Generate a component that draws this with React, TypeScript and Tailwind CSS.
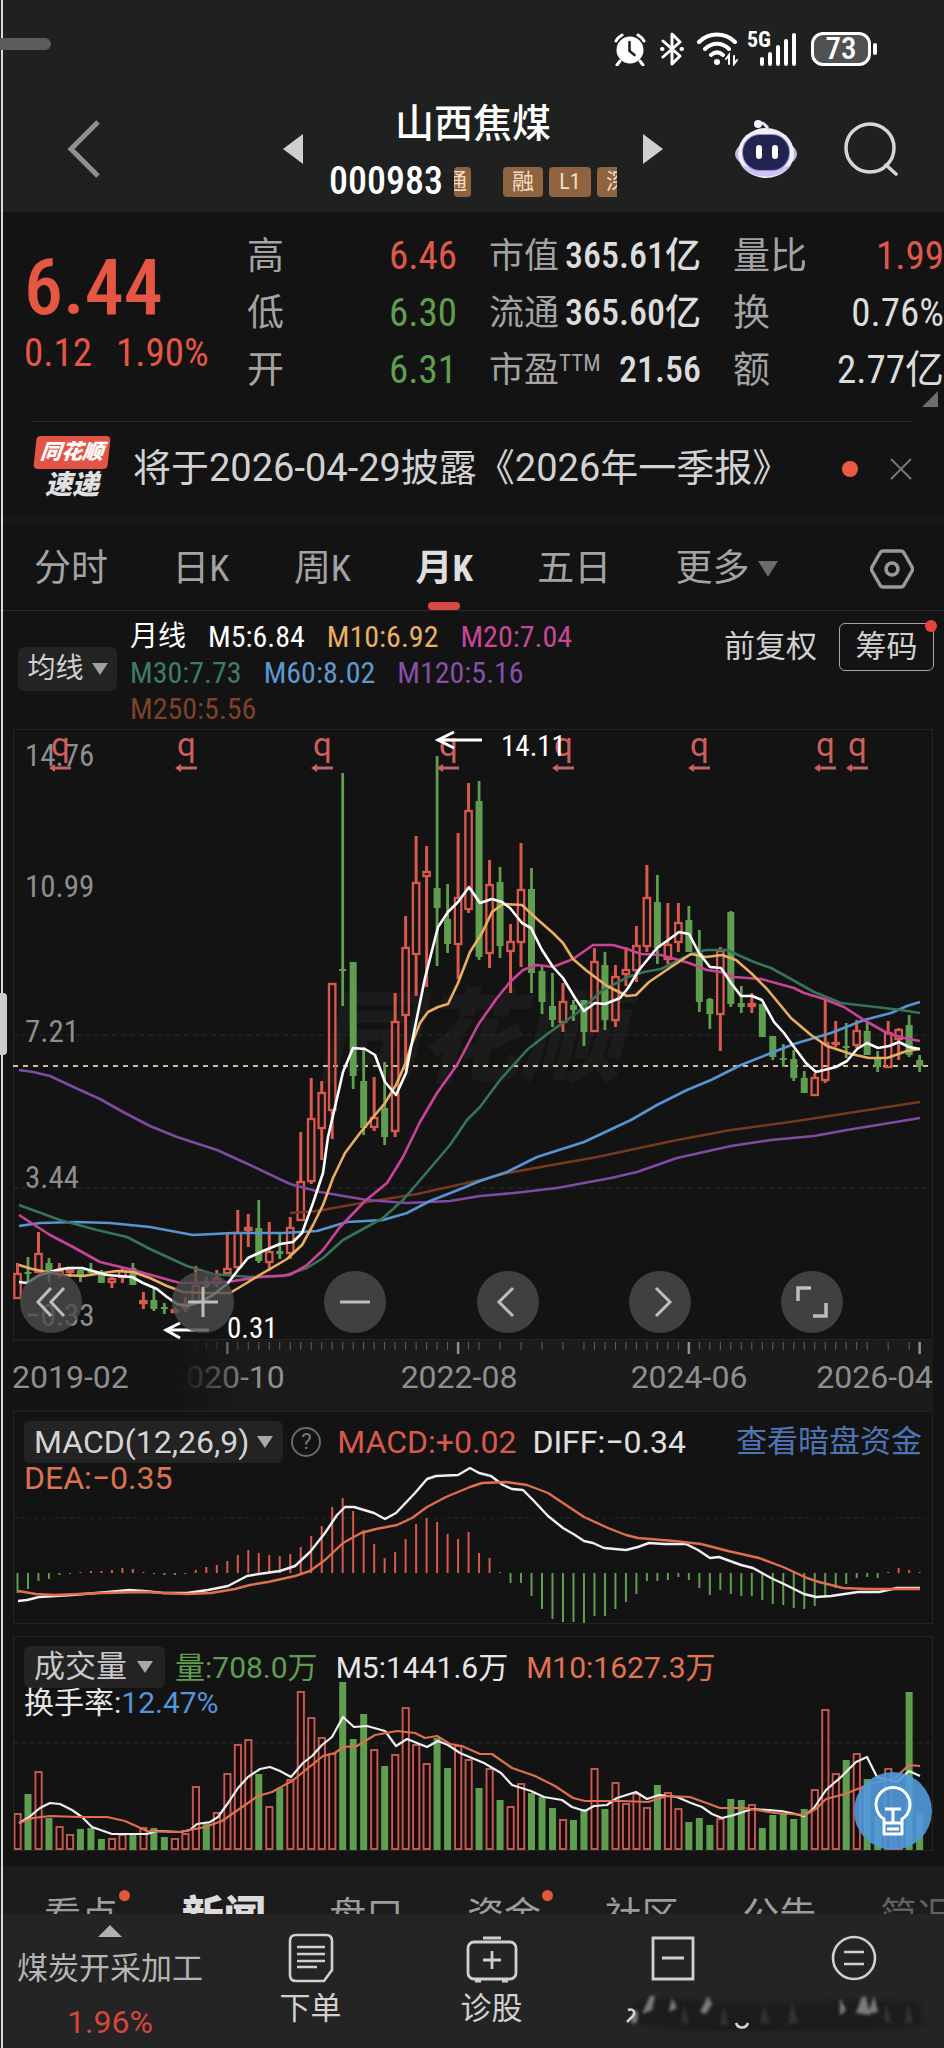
import type { ReactNode } from 'react'

type Candle = [dir: 'u' | 'd', high: number, top: number, bottom: number, low: number]

const STEP = 10.49
const X0 = 17.5
const RED = '#d9594c'
const GREEN = '#5f9e4f'

const x = (i: number) => X0 + STEP * i

const candles: Candle[] = [
  ['u', 1263, 1273, 1299, 1299], ['d', 1257, 1272, 1274, 1283], ['u', 1232, 1253, 1273, 1273], ['d', 1258, 1263, 1272, 1282],
  ['u', 1263, 1270, 1275, 1278], ['u', 1267, 1269, 1273, 1277], ['d', 1267, 1270, 1277, 1282], ['d', 1263, 1270, 1273, 1276],
  ['d', 1270, 1272, 1283, 1283], ['u', 1277, 1278, 1283, 1288], ['u', 1267, 1270, 1278, 1283], ['d', 1263, 1268, 1285, 1285],
  ['u', 1292, 1300, 1304, 1309], ['d', 1287, 1300, 1309, 1311], ['d', 1303, 1307, 1309, 1314], ['u', 1307, 1309, 1313, 1313],
  ['u', 1297, 1303, 1309, 1312], ['u', 1266, 1285, 1303, 1303], ['d', 1277, 1282, 1287, 1288], ['u', 1270, 1278, 1284, 1287],
  ['u', 1233, 1268, 1274, 1275], ['u', 1210, 1232, 1268, 1270], ['u', 1214, 1227, 1231, 1247], ['d', 1200, 1228, 1261, 1263],
  ['u', 1222, 1251, 1263, 1271], ['d', 1233, 1251, 1254, 1259], ['u', 1217, 1227, 1254, 1259], ['u', 1132, 1181, 1221, 1221],
  ['u', 1078, 1118, 1182, 1184], ['u', 1081, 1092, 1129, 1160], ['u', 983, 983, 1111, 1139], ['d', 773, 969, 971, 1006],
  ['d', 962, 962, 1076, 1089], ['d', 1047, 1081, 1128, 1135], ['u', 1077, 1117, 1128, 1131], ['d', 1062, 1108, 1137, 1145],
  ['u', 993, 1021, 1132, 1137], ['u', 916, 947, 1016, 1070], ['u', 836, 882, 955, 996], ['u', 846, 871, 877, 987],
  ['d', 756, 888, 908, 966], ['d', 884, 919, 944, 953], ['u', 833, 897, 945, 979], ['u', 783, 810, 910, 913],
  ['d', 781, 801, 957, 960], ['u', 860, 884, 954, 968], ['d', 867, 882, 946, 958], ['u', 924, 941, 952, 993],
  ['u', 843, 889, 943, 967], ['d', 868, 889, 973, 993], ['d', 966, 971, 1002, 1014], ['d', 973, 1006, 1020, 1027],
  ['u', 983, 1001, 1023, 1032], ['d', 1000, 1005, 1010, 1021], ['d', 1000, 1000, 1032, 1046], ['u', 948, 961, 1032, 1032],
  ['d', 952, 965, 1020, 1030], ['u', 965, 976, 1021, 1027], ['u', 947, 969, 975, 986], ['u', 926, 945, 971, 982],
  ['u', 865, 897, 947, 952], ['d', 875, 902, 948, 964], ['u', 903, 944, 960, 964], ['u', 903, 922, 943, 952],
  ['d', 906, 920, 952, 952], ['d', 930, 953, 1002, 1012], ['d', 998, 999, 1014, 1029], ['u', 947, 950, 1015, 1051],
  ['d', 911, 912, 1004, 1007], ['d', 986, 1003, 1007, 1013], ['u', 993, 1003, 1007, 1013], ['d', 1004, 1004, 1037, 1037],
  ['d', 1036, 1036, 1057, 1060], ['d', 1044, 1058, 1060, 1067], ['d', 1050, 1059, 1078, 1081], ['d', 1071, 1078, 1093, 1093],
  ['u', 1073, 1077, 1096, 1096], ['u', 999, 1042, 1081, 1083], ['u', 1021, 1042, 1045, 1047], ['d', 1023, 1046, 1048, 1058],
  ['u', 1020, 1030, 1046, 1048], ['d', 1022, 1031, 1055, 1055], ['d', 1051, 1057, 1067, 1072], ['u', 1021, 1032, 1068, 1068],
  ['u', 1028, 1029, 1040, 1060], ['d', 1015, 1025, 1055, 1057], ['d', 1055, 1060, 1066, 1072],
]

const averages = [
  {
    color: '#74391f',
    points: '290,1213 317,1211 367,1202 417,1194 480,1180 507,1173 597,1157 677,1140 731,1130 797,1121 887,1107 920,1102',
  },
  {
    color: '#7f4aa3',
    points:
      '19,1070 33,1072 50,1076 80,1090 100,1099 123,1112 150,1126 177,1137 217,1150 250,1165 290,1184 320,1192 367,1200 407,1203 450,1201 480,1196 514,1193 557,1188 611,1178 637,1172 677,1158 731,1146 771,1140 814,1136 847,1130 914,1119 920,1118',
  },
  {
    color: '#5694d2',
    points:
      '19,1226 40,1223 77,1222 110,1223 150,1227 193,1235 233,1233 283,1233 317,1231 347,1222 383,1220 407,1213 430,1201 453,1192 480,1181 507,1172 537,1157 584,1142 631,1120 657,1105 687,1090 711,1080 741,1065 771,1053 794,1044 831,1033 864,1020 891,1013 907,1006 920,1002',
  },
  {
    color: '#36745a',
    points:
      '19,1205 60,1220 97,1230 127,1237 150,1249 187,1266 213,1274 250,1277 283,1276 307,1268 323,1258 343,1240 383,1218 403,1200 427,1172 450,1145 467,1120 480,1107 500,1080 528,1049 550,1032 577,1013 603,990 628,977 644,972 661,969 691,954 706,950 727,950 754,962 771,968 791,979 814,992 841,1003 867,1006 901,1010 920,1013',
  },
  {
    color: '#cb4398',
    points:
      '19,1215 50,1235 73,1247 100,1262 133,1270 180,1283 227,1282 260,1277 290,1275 307,1265 323,1250 340,1227 365,1201 387,1183 403,1157 420,1122 437,1093 457,1065 466,1048 478,1025 497,998 510,982 523,970 537,965 553,967 573,959 593,945 613,945 627,949 641,954 661,955 689,963 707,970 721,972 734,977 761,979 794,988 804,993 824,999 844,1007 864,1020 887,1033 904,1038 920,1041',
  },
  {
    color: '#e9ae62',
    points:
      '19,1265 32,1269 47,1272 63,1275 83,1276 103,1273 117,1271 133,1272 150,1278 167,1286 183,1292 203,1293 230,1293 245,1284 263,1273 287,1259 302,1245 313,1225 323,1205 333,1178 345,1153 360,1133 385,1103 396,1085 406,1062 411,1046 420,1023 428,1012 438,1007 448,1004 458,983 470,952 482,933 492,912 503,904 522,905 537,919 553,933 563,943 573,959 587,971 607,986 627,996 636,995 649,982 671,967 691,954 706,957 722,955 736,960 751,973 767,989 791,1018 811,1035 827,1046 851,1054 869,1058 887,1058 907,1051 920,1049',
  },
  {
    color: '#ffffff',
    points:
      '19,1282 27,1283 40,1275 57,1270 68,1268 82,1268 93,1271 107,1275 132,1277 143,1283 157,1289 167,1297 177,1304 187,1306 200,1302 213,1295 228,1283 238,1270 248,1258 263,1251 280,1244 293,1242 302,1233 313,1203 323,1173 328,1137 335,1107 343,1072 353,1048 365,1049 375,1055 385,1082 396,1095 406,1073 413,1037 425,978 438,927 448,912 458,902 469,887 480,903 492,899 502,902 510,908 522,923 531,928 542,950 553,967 563,978 575,998 584,1011 595,1003 605,1004 620,998 628,988 639,970 657,948 671,938 679,932 689,934 699,953 710,967 721,968 731,983 741,996 752,996 762,1000 774,1022 784,1033 794,1047 806,1063 816,1072 836,1067 847,1061 857,1049 867,1043 878,1048 889,1046 899,1042 909,1047 920,1049',
  },
]

const macdBars = [
  -20, -16, -8, -6, -2, -1, 1, 2, 2, 3, 5, 4, 1, -1, -2, -2, -1, 3, 6, 8, 12, 18, 23, 20, 18, 17, 19, 26, 37, 47, 66, 75, 62, 43,
  29, 15, 21, 34, 49, 55, 51, 39, 34, 41, 20, 15, 1, -10, -10, -23, -36, -46, -49, -49, -51, -43, -43, -36, -29, -21, -8, -8, -7,
  -4, -7, -15, -22, -17, -21, -23, -23, -27, -31, -32, -35, -36, -33, -23, -15, -11, -5, -4, -5, 1, 5, 3, 1,
]

const diffLine =
  '18,1601 27,1600 39,1597 72,1595 108,1592 129,1590 144,1591 163,1593 187,1593 208,1590 228,1586 247,1576 259,1574 280,1571 295,1566 310,1552 325,1533 337,1515 345,1507 354,1507 364,1510 374,1513 385,1519 396,1513 415,1493 427,1479 436,1476 458,1475 470,1468 479,1473 491,1476 503,1485 512,1489 523,1490 533,1500 548,1516 563,1528 575,1535 584,1541 593,1543 604,1548 626,1550 638,1547 649,1543 665,1544 686,1544 698,1550 710,1558 719,1557 741,1565 753,1568 771,1578 786,1585 804,1594 816,1597 831,1596 858,1592 879,1592 897,1588 920,1588'

const deaLine =
  '18,1591 36,1594 54,1595 102,1593 144,1592 187,1594 211,1593 235,1589 250,1585 268,1582 295,1576 310,1571 325,1560 343,1543 361,1533 376,1529 397,1525 412,1518 427,1507 446,1497 470,1487 482,1483 506,1482 527,1485 548,1493 584,1517 608,1528 626,1535 638,1538 674,1541 701,1544 728,1551 759,1558 783,1567 807,1578 819,1582 843,1588 867,1589 885,1589 920,1589'

const volumes = [
  37, 56, 79, 32, 24, 16, 21, 22, 11, 12, 16, 17, 23, 22, 13, 12, 17, 64, 28, 38, 77, 106, 111, 76, 44, 62, 71, 159, 133, 113, 97,
  168, 111, 136, 101, 84, 96, 143, 106, 87, 112, 82, 105, 91, 62, 82, 50, 44, 67, 57, 53, 42, 31, 30, 41, 82, 41, 68, 47, 57, 43,
  65, 58, 42, 28, 32, 25, 32, 51, 50, 46, 22, 35, 37, 31, 41, 61, 141, 77, 90, 97, 71, 34, 82, 24, 158, 37,
]

const volM5 =
  '19,1823 28,1818 40,1808 50,1803 60,1804 72,1810 82,1817 92,1827 112,1834 147,1834 157,1831 180,1832 190,1830 197,1824 210,1822 218,1817 228,1803 238,1788 248,1777 260,1769 270,1767 280,1771 291,1777 303,1763 312,1756 322,1745 332,1737 343,1717 354,1727 367,1726 385,1731 396,1746 407,1739 427,1747 438,1741 448,1745 460,1753 484,1763 501,1773 512,1785 531,1791 544,1797 562,1800 572,1807 585,1811 594,1806 607,1805 617,1798 636,1792 647,1799 659,1795 677,1797 691,1803 702,1807 712,1814 722,1818 734,1815 752,1809 781,1811 791,1813 804,1816 814,1808 826,1790 841,1777 856,1762 867,1757 877,1777 897,1782 909,1771 920,1776'

const volM10 =
  '19,1823 33,1818 50,1816 80,1817 107,1817 125,1821 147,1831 180,1832 205,1827 222,1821 235,1812 258,1796 272,1792 292,1781 323,1756 335,1753 343,1747 357,1746 375,1735 397,1731 415,1733 425,1738 437,1736 450,1744 462,1746 480,1754 492,1754 512,1768 535,1776 555,1786 573,1798 585,1801 622,1801 648,1802 667,1796 690,1797 712,1805 720,1808 745,1808 775,1813 805,1815 817,1808 826,1799 845,1794 870,1784 895,1778 909,1765 920,1766'

const priceLabels = [
  { y: 766, text: '14.76' },
  { y: 897, text: '10.99' },
  { y: 1042, text: '7.21' },
  { y: 1188, text: '3.44' },
  { y: 1326, text: '−0.33' },
]

const dividendMarks = [49, 175, 311, 437, 552, 688, 814, 846]

const skippedTicks = [45, 47, 49, 51, 53, 82, 84]
const majorTicks = [20, 42, 64, 86]

function Caret({ className = '' }: { className?: string }) {
  return (
    <svg viewBox="0 0 16 12" className={`h-3 w-4 fill-current ${className}`} aria-hidden="true">
      <path d="M0 0h16L8 12z" />
    </svg>
  )
}

function StatusBar() {
  return (
    <div className="flex h-[98px] items-center justify-end gap-3 pr-[67px] text-white">
      <svg viewBox="0 0 34 34" className="h-[34px] w-[34px]" aria-hidden="true">
        <circle cx="17" cy="18" r="13.5" fill="#fff" />
        <path d="M3 9a16 16 0 0 1 6-6M31 9a16 16 0 0 0-6-6M7 29l-3 4M27 29l3 4" stroke="#fff" strokeWidth="3" strokeLinecap="round" fill="none" />
        <path d="M16.500 10v9l5 4" stroke="#1f2121" strokeWidth="2.600" fill="none" strokeLinecap="round" />
      </svg>
      <svg viewBox="0 0 26 34" className="h-[34px] w-[26px]" fill="none" stroke="#fff" strokeWidth="3" strokeLinejoin="round" strokeLinecap="round" aria-hidden="true">
        <path d="M4 9l17 15-8 8V2l8 8L4 25" />
        <path d="M3 17h.5M22.500 17h.5" strokeWidth="4" />
      </svg>
      <svg viewBox="0 0 42 34" className="h-[34px] w-[42px]" fill="none" stroke="#fff" strokeWidth="4" strokeLinecap="round" aria-hidden="true">
        <path d="M2 10c10-10 26-10 36 0M8 17c7-7 17-7 24 0M14 23c4-3.500 8-3.500 12 0" />
        <circle cx="20" cy="30" r="3" fill="#fff" stroke="none" />
        <path d="M32 32v-9l-3 4M37 24v8l3-4" strokeWidth="2" />
      </svg>
      <div className="relative -ml-1 h-[34px] w-[52px]">
        <span className="absolute left-0 top-0 text-[22px] leading-4 font-bold">5G</span>
        <svg viewBox="0 0 52 34" className="h-full w-full" stroke="#fff" strokeWidth="4" strokeLinecap="round" aria-hidden="true">
          <path d="M15 27v5M23 22v10M31 15v17M39 9v23M47 3v29" />
        </svg>
      </div>
      <div className="flex items-center">
        <span className="flex h-[34px] w-[60px] items-center justify-center rounded-xl border-[3px] border-white bg-[#505252] text-[31px] font-medium">73</span>
        <span className="ml-0.5 h-3 w-1 rounded-full bg-white" />
      </div>
    </div>
  )
}

function Tag({ children, className = '' }: { children: ReactNode; className?: string }) {
  return (
    <span className={`flex h-[30px] shrink-0 items-center overflow-hidden rounded-sm bg-[#8f633f] text-[22px] text-[#f3dfc3] ${className}`}>
      {children}
    </span>
  )
}

function NavBar() {
  return (
    <div className="flex h-[114px] items-center justify-between pl-[66px] pr-[46px]">
      <button type="button" aria-label="返回" className="mb-3">
        <svg viewBox="0 0 36 58" className="h-[58px] w-9" fill="none" stroke="#8f9090" strokeWidth="5" aria-hidden="true">
          <path d="M32 2L5 29l27 27" />
        </svg>
      </button>
      <div className="mb-1 ml-[110px] flex items-center">
        <button type="button" aria-label="上一只" className="mb-2">
          <svg viewBox="0 0 20 30" className="h-[30px] w-5 fill-[#cfcfcf]" aria-hidden="true">
            <path d="M20 0v30L0 15z" />
          </svg>
        </button>
        <div className="flex w-[340px] flex-col items-center">
          <h1 className="text-[39px] leading-[57px] font-medium text-white">山西焦煤</h1>
          <div className="flex h-[57px] w-[288px] items-center justify-between overflow-hidden">
            <span className="text-[38px] leading-[57px] font-medium text-white">000983</span>
            <div className="flex w-[163px] items-center gap-1.5 overflow-hidden">
              <Tag className="w-[17px] justify-end pr-1">通</Tag>
              <Tag className="ml-[26px] w-10 justify-center">融</Tag>
              <Tag className="w-[42px] justify-center">L1</Tag>
              <Tag className="w-10 justify-center">深</Tag>
            </div>
          </div>
        </div>
        <button type="button" aria-label="下一只" className="mb-2">
          <svg viewBox="0 0 20 30" className="h-[30px] w-5 fill-[#cfcfcf]" aria-hidden="true">
            <path d="M0 0v30l20-15z" />
          </svg>
        </button>
      </div>
      <div className="mb-3 flex items-center gap-[46px]">
        <button type="button" aria-label="智能助手">
          <svg viewBox="0 0 64 60" className="h-[60px] w-16" aria-hidden="true">
            <path d="M25 5c3-3 6 1 9 4" stroke="#e4e4f4" strokeWidth="3" fill="none" />
            <circle cx="24" cy="5" r="4" fill="#f3f3fb" />
            <ellipse cx="32" cy="35" rx="31" ry="16" fill="#bdb6ee" />
            <ellipse cx="32" cy="34" rx="28" ry="25" fill="#f0effa" />
            <path d="M6 44c7 18 45 18 52 0-6 8-46 8-52 0z" fill="#c9c4f2" />
            <rect x="8" y="15" width="48" height="37" rx="18" fill="#8f8fd6" />
            <rect x="9" y="16" width="46" height="35" rx="17" fill="#20244f" />
            <rect x="22" y="26" width="6" height="14" rx="3" fill="#fff" />
            <rect x="38" y="26" width="6" height="14" rx="3" fill="#fff" />
          </svg>
        </button>
        <button type="button" aria-label="搜索">
          <svg viewBox="0 0 54 54" className="h-[54px] w-[54px]" fill="none" stroke="#d6d6d6" strokeWidth="3.500" aria-hidden="true">
            <circle cx="26" cy="26" r="24" />
            <path d="M42 43l10 9" strokeLinecap="round" />
          </svg>
        </button>
      </div>
    </div>
  )
}

const quotes = [
  { label: '高', value: '6.46', tone: 'text-[#e0584b]', cap: '市值', capValue: '365.61亿', label2: '量比', value2: '1.99', tone2: 'text-[#e0584b]' },
  { label: '低', value: '6.30', tone: 'text-[#5f9e4f]', cap: '流通', capValue: '365.60亿', label2: '换', value2: '0.76%', tone2: 'text-[#dcdcdc]' },
  { label: '开', value: '6.31', tone: 'text-[#5f9e4f]', cap: '市盈', sup: 'TTM', capValue: '21.56', label2: '额', value2: '2.77亿', tone2: 'text-[#dcdcdc]' },
]

function Quote() {
  return (
    <section className="relative flex pt-4 pb-[22px]">
      <div className="w-[247px] pl-6 text-[#e65743]">
        <div className="pt-5 text-[78px] leading-[80px] font-medium">6.44</div>
        <div className="flex gap-6 text-[39px] leading-[50px]">
          <span>0.12</span>
          <span>1.90%</span>
        </div>
      </div>
      <dl className="grid flex-1 auto-rows-[57px] grid-cols-[210px_212px_1fr] items-center gap-x-8 text-[39px] leading-[57px] text-[#dcdcdc]">
        {quotes.map((q) => (
          <div key={q.label} className="contents">
            <div className="flex justify-between">
              <dt className="text-[37px] text-[#a3a3a3]">{q.label}</dt>
              <dd className={q.tone}>{q.value}</dd>
            </div>
            <div className="flex justify-between text-[36px] whitespace-nowrap">
              <dt className="text-[35px] text-[#a3a3a3]">
                {q.cap}
                {q.sup && <sup className="text-[23px]">{q.sup}</sup>}
              </dt>
              <dd className="font-medium">{q.capValue}</dd>
            </div>
            <div className="flex justify-between whitespace-nowrap">
              <dt className="text-[37px] text-[#a3a3a3]">{q.label2}</dt>
              <dd className={q.tone2}>{q.value2}</dd>
            </div>
          </div>
        ))}
      </dl>
      <span className="absolute right-1.5 bottom-3.5 size-4 bg-[#6e6e6e] [clip-path:polygon(100%_0,100%_100%,0_100%)]" />
    </section>
  )
}

function Notice() {
  return (
    <section className="mx-8 flex h-[94px] items-center border-t border-[#2c2c2c]">
      <div className="flex w-[80px] flex-col items-center italic">
        <span className="flex h-[33px] w-[74px] -skew-x-6 items-center justify-center rounded-sm bg-[#e25546] text-[21px] font-black text-white">同花顺</span>
        <span className="text-[27px] leading-[32px] font-black text-[#e0e0e0]">速递</span>
      </div>
      <a href="#report" className="ml-[21px] font-[Roboto,'Noto_Sans_CJK_SC',sans-serif] text-[38px] whitespace-nowrap text-[#d2d2d2]">
        将于2026-04-29披露《2026年一季报》
      </a>
      <span className="ml-auto size-4 rounded-full bg-[#ea5b43]" />
      <button type="button" aria-label="关闭" className="ml-8">
        <svg viewBox="0 0 22 22" className="size-[22px]" stroke="#777" strokeWidth="2" aria-hidden="true">
          <path d="M1 1l20 20M21 1L1 21" />
        </svg>
      </button>
    </section>
  )
}

function PeriodTabs() {
  return (
    <nav className="flex h-[87px] items-center justify-between border-b border-[#2c2c2c] pt-1 pl-[34px] pr-[30px] text-[37px] text-[#a3a3a3]">
      <button type="button">分时</button>
      <button type="button">日K</button>
      <button type="button">周K</button>
      <button type="button" className="relative h-full font-bold text-[#dedede]">
        月K
        <span className="absolute bottom-0 left-1/2 h-2 w-8 -translate-x-1/2 rounded-full bg-[#d64a41]" />
      </button>
      <button type="button">五日</button>
      <button type="button" className="flex items-center gap-2">
        更多
        <svg viewBox="0 0 20 16" className="h-4 w-5 fill-[#6b6b6b]" aria-hidden="true">
          <path d="M0 0h20L10 16z" />
        </svg>
      </button>
      <button type="button" aria-label="设置" className="ml-7">
        <svg viewBox="0 0 44 40" className="h-10 w-11" fill="none" stroke="#999" strokeWidth="3.500" strokeLinejoin="round" aria-hidden="true">
          <path d="M13 2h18q2 0 3 2l8 14q1 2 0 4l-8 14q-1 2-3 2H13q-2 0-3-2L2 22q-1-2 0-4l8-14q1-2 3-2z" />
          <circle cx="22" cy="20" r="6" />
        </svg>
      </button>
    </nav>
  )
}

function AverageLegend() {
  return (
    <div className="flex h-[118px] pt-2 pl-[18px] pr-2.5">
      <button type="button" className="mt-7 flex h-11 w-[99px] items-center justify-center gap-2 rounded-md bg-[#232323] text-[28px] text-[#d0d0d0]">
        均线
        <Caret className="text-[#a0a0a0]" />
      </button>
      <div className="ml-[13px] text-[30px] leading-9">
        <div className="flex gap-[22px] text-white">
          <span className="text-[28px]">月线</span>
          <span>M5:6.84</span>
          <span className="text-[#e9b065]">M10:6.92</span>
          <span className="text-[#c8479a]">M20:7.04</span>
        </div>
        <div className="flex gap-[22px]">
          <span className="text-[#3f7d62]">M30:7.73</span>
          <span className="text-[#5c99d4]">M60:8.02</span>
          <span className="text-[#8450a8]">M120:5.16</span>
        </div>
        <div className="text-[#7d4127]">M250:5.56</div>
      </div>
      <div className="mt-1 ml-auto flex h-12 items-center gap-[22px] text-[31px] text-[#d0d0d0]">
        <button type="button">前复权</button>
        <button type="button" className="relative h-12 w-[95px] rounded-md border border-[#a5a5a5]">
          筹码
          <span className="absolute -top-1 -right-1 size-3 rounded-full bg-[#e8433a]" />
        </button>
      </div>
    </div>
  )
}

function RoundButton({ label, children }: { label: string; children: ReactNode }) {
  return (
    <button type="button" aria-label={label} className="flex size-[62px] items-center justify-center rounded-full bg-[#4c4c4c]/80">
      <svg viewBox="0 0 32 32" className="size-8" fill="none" stroke="#bdbdbd" strokeWidth="3" aria-hidden="true">
        {children}
      </svg>
    </button>
  )
}

function PriceChart() {
  return (
    <section className="relative mr-[11px] ml-[13px]">
      <svg viewBox="13 729 920 611" className="block w-full" role="img" aria-label="月K">
        <text x="316" y="1074" fill="#1b1b1b" fontSize="102" fontWeight="900" fontStyle="italic">同花顺</text>
        <rect x="13.500" y="729.500" width="919" height="610" fill="none" stroke="#242424" />
        <path d="M13 1035h920M13 1188h920" stroke="#2b2b2b" strokeDasharray="5 4" />
        <g fill="#8d8d8d" fontSize="31">
          {priceLabels.map((l) => (
            <text key={l.text} x="25" y={l.y}>{l.text}</text>
          ))}
        </g>
        <path d="M13 1066h917" stroke="#d5bf94" strokeWidth="2" strokeDasharray="5 5" />
        {candles.map(([dir, high, top, bottom, low], i) =>
          dir === 'u' ? (
            <g key={i} stroke={RED} fill="none">
              <path d={`M${x(i)} ${high}V${top}M${x(i)} ${bottom}V${low}`} strokeWidth="3" />
              <rect x={x(i) - 3.2} y={top + 1} width="6.400" height={Math.max(bottom - top - 2, 1)} strokeWidth="2.300" />
            </g>
          ) : (
            <g key={i} fill={GREEN}>
              <rect x={x(i) - 1.4} y={high} width="2.800" height={low - high} />
              <rect x={x(i) - 3.5} y={top} width="7" height={bottom - top} />
            </g>
          ),
        )}
        <g fill="none" strokeWidth="2.600" strokeLinejoin="round">
          {averages.map((a) => (
            <polyline key={a.color} points={a.points} stroke={a.color} />
          ))}
        </g>
        {dividendMarks.map((m) => (
          <g key={m}>
            <text x={m + 2} y="756" fill="#cf5f5c" fontSize="33" className="font-[Roboto,sans-serif]">q</text>
            <path d={`M${m + 22} 768h-20`} stroke="#b9666a" strokeWidth="3" />
            <path d={`M${m} 768l6-4v8z`} fill="#cf5f5c" />
          </g>
        ))}
        <g stroke="#fff" strokeWidth="3" fill="none">
          <path d="M482 740h-43M454 732l-16 8 16 8" />
          <path d="M209 1330h-42M180 1323l-14 7 14 8" />
        </g>
        <g fill="#fff" fontSize="29">
          <text x="501" y="756">14.11</text>
          <text x="227" y="1338">0.31</text>
        </g>
      </svg>
      <div className="absolute right-[90px] bottom-[7px] left-[7px] flex justify-between">
        <RoundButton label="最早"><path d="M16 2L3 16l13 14M29 2L16 16l13 14" /></RoundButton>
        <RoundButton label="放大"><path d="M16 1v30M1 16h30" /></RoundButton>
        <RoundButton label="缩小"><path d="M1 16h30" /></RoundButton>
        <RoundButton label="前移"><path d="M21 2L7 16l14 14" /></RoundButton>
        <RoundButton label="后移"><path d="M12 2l14 14-14 14" /></RoundButton>
        <RoundButton label="全屏"><path d="M2 15V2h13M30 17v13H17" strokeWidth="3.500" /></RoundButton>
      </div>
    </section>
  )
}

function TimeAxis() {
  return (
    <svg
      viewBox="13 1340 920 71"
      className="mr-[11px] ml-[13px] block bg-[#1b1b1b] font-[Roboto,sans-serif]"
      role="img"
      aria-label="时间轴"
    >
      <defs>
        <linearGradient id="fade">
          <stop offset="0.700" stopColor="#141414" />
          <stop offset="1" stopColor="#141414" stopOpacity="0" />
        </linearGradient>
      </defs>
      {candles.map((_, i) =>
        i < 17 || skippedTicks.includes(i) ? null : majorTicks.includes(i) ? (
          <path key={i} d={`M${x(i)} 1342v12`} stroke="#8f8f8f" strokeWidth="2.500" />
        ) : (
          <path key={i} d={`M${x(i)} 1342v8`} stroke="#626262" />
        ),
      )}
      <g fill="#8f8f8f" fontSize="32">
        <text x="168" y="1388">2020-10</text>
        <rect x="13" y="1341" width="240" height="69" fill="url(#fade)" />
        <text x="12" y="1388">2019-02</text>
        <text x="459" y="1388" textAnchor="middle">2022-08</text>
        <text x="689" y="1388" textAnchor="middle">2024-06</text>
        <text x="933" y="1388" textAnchor="end">2026-04</text>
      </g>
    </svg>
  )
}

function MacdChart() {
  return (
    <section className="relative mr-[11px] ml-[13px] border border-[#242424]">
      <svg viewBox="14 1412 918 211" className="block w-full" role="img" aria-label="MACD">
        <path d="M14 1518h918" stroke="#2b2b2b" strokeDasharray="3 4" />
        {macdBars.map((v, i) => (
          <path key={i} d={`M${x(i)} 1573v${-v}`} stroke={v > 0 ? RED : GREEN} strokeWidth="2" />
        ))}
        <polyline points={diffLine} fill="none" stroke="#f0f0f0" strokeWidth="2.400" strokeLinejoin="round" />
        <polyline points={deaLine} fill="none" stroke="#df6f4d" strokeWidth="2.400" strokeLinejoin="round" />
      </svg>
      <div className="absolute inset-x-2.5 top-[9px] font-[Roboto,'Noto_Sans_CJK_SC',sans-serif] text-[32px]">
        <div className="flex h-[42px] items-center whitespace-nowrap">
          <button type="button" className="flex h-[42px] items-center gap-2 rounded-md bg-[#232323] px-2.5 text-[#d4d4d4]">
            MACD(12,26,9)
            <Caret className="text-[#a8a8a8]" />
          </button>
          <button type="button" aria-label="说明" className="ml-2 size-[30px] rounded-full border-2 border-[#6a6a6a] text-[22px] leading-6 text-[#7a7a7a]">?</button>
          <span className="ml-4 text-[#d9594c]">MACD:+0.02</span>
          <span className="ml-4 text-[#e0e0e0]">DIFF:−0.34</span>
          <a href="#dark" className="ml-auto text-[31px] text-[#4d74b3]">查看暗盘资金</a>
        </div>
        <div className="leading-[30px] text-[#da7450]">DEA:−0.35</div>
      </div>
    </section>
  )
}

function VolumeChart() {
  return (
    <section className="relative mt-3 mr-[11px] ml-[13px] border border-[#242424]">
      <svg viewBox="14 1637 918 213" className="block w-full" role="img" aria-label="成交量">
        <path d="M14 1743h918" stroke="#2b2b2b" strokeDasharray="4 4" />
        {volumes.map((v, i) =>
          candles[i][0] === 'u' ? (
            <rect key={i} x={x(i) - 3} y={1851 - v} width="6.200" height={v - 2} fill="#1d0808" stroke="#c45c54" strokeWidth="1.900" />
          ) : (
            <rect key={i} x={x(i) - 3.5} y={1850 - v} width="7" height={v} fill={GREEN} />
          ),
        )}
        <polyline points={volM5} fill="none" stroke="#f0f0f0" strokeWidth="2.200" strokeLinejoin="round" />
        <polyline points={volM10} fill="none" stroke="#df6f4d" strokeWidth="2.200" strokeLinejoin="round" />
      </svg>
      <div className="absolute inset-x-2.5 top-[9px] font-[Roboto,'Noto_Sans_CJK_SC',sans-serif] text-[30px]">
        <div className="flex h-[42px] items-center gap-[18px] whitespace-nowrap text-[#e6e6e6]">
          <button type="button" className="-mr-2 flex h-[42px] items-center gap-2.5 rounded-md bg-[#232323] px-2.5 text-[31px] text-[#c8c8c8]">
            成交量
            <Caret className="mr-0.5 text-[#a8a8a8]" />
          </button>
          <span className="text-[#5f9e4f]">量:708.0万</span>
          <span>M5:1441.6万</span>
          <span className="text-[#e2744f]">M10:1627.3万</span>
        </div>
        <div className="leading-[30px] text-[#e6e6e6]">
          换手率:<span className="text-[#5794dd]">12.47%</span>
        </div>
      </div>
      <button type="button" aria-label="提示" className="absolute right-0 bottom-0 flex size-[78px] items-center justify-center rounded-full bg-[#5199dd]/90">
        <svg viewBox="0 0 40 50" className="h-[50px] w-10" fill="none" stroke="#fff" strokeWidth="3" strokeLinejoin="round" aria-hidden="true">
          <path d="M11 37v-4a17 17 0 1 1 18 0v4M12 23h16M20 23v13M11 37h18v11H11zM14 43h12" />
        </svg>
      </button>
    </section>
  )
}

const infoTabs = ['看点', '新闻', '盘口', '资金', '社区', '公告', '简况']

function InfoTabs() {
  return (
    <nav className="mt-[15px] h-12 overflow-hidden bg-[#1c1c1c]">
      <div className="-mr-2.5 flex items-start justify-between pt-[27px] pl-11 text-[37px] leading-[48px] text-[#9c9c9c]">
        {infoTabs.map((t) => (
          <button key={t} type="button" className={`relative ${t === '新闻' ? 'text-[42px] font-black text-[#dcdcdc]' : ''} ${t === '简况' ? 'text-[#606060]' : ''}`}>
            {t}
            {(t === '看点' || t === '资金') && <span className="absolute -top-[3px] -right-3 size-[11px] rounded-full bg-[#e2553f]" />}
          </button>
        ))}
      </div>
    </nav>
  )
}

function BottomBar() {
  return (
    <footer className="relative flex h-[134px] bg-[#242424] text-[31px] text-[#d0d0d0]">
      <button type="button" className="flex w-[220px] flex-col items-center pt-[11px]">
        <svg viewBox="0 0 24 12" className="h-3 w-6 fill-[#b0b0b0]" aria-hidden="true">
          <path d="M12 0l12 12H0z" />
        </svg>
        <span className="mt-2 leading-[48px] text-[#b5b5b5]">煤炭开采加工</span>
        <span className="mt-1 font-[Roboto,sans-serif] text-[32px] leading-[50px] text-[#d8453a]">1.96%</span>
      </button>
      <div className="grid flex-1 grid-cols-4 pt-[19px]">
        <button type="button" className="flex flex-col items-center">
          <svg viewBox="0 0 46 50" className="h-[50px] w-[46px]" fill="none" stroke="#d0d0d0" strokeWidth="2.600" aria-hidden="true">
            <path d="M8 2h30q6 0 6 6v29l-8 11H8q-6 0-6-6V8q0-6 6-6z" />
            <path d="M9 14h28M9 21h28M9 28h28M9 34h20" />
          </svg>
          <span className="mt-0.5 leading-[48px]">下单</span>
        </button>
        <button type="button" className="flex flex-col items-center">
          <svg viewBox="0 0 52 50" className="h-[50px] w-[52px]" fill="none" stroke="#d0d0d0" strokeWidth="2.800" aria-hidden="true">
            <rect x="2" y="9" width="48" height="37" rx="6" />
            <path d="M17 5h18M9 48h6M36 48h6M26 18v18M17 27h18" />
          </svg>
          <span className="mt-0.5 leading-[48px]">诊股</span>
        </button>
        <button type="button" aria-label="更多操作" className="flex flex-col items-center">
          <svg viewBox="0 0 44 50" className="h-[50px] w-11" fill="none" stroke="#d0d0d0" strokeWidth="2.800" aria-hidden="true">
            <path d="M2 5h40v41H2zM11 25h22" />
          </svg>
        </button>
        <button type="button" aria-label="菜单" className="flex flex-col items-center">
          <svg viewBox="0 0 46 50" className="h-[50px] w-[46px]" fill="none" stroke="#d0d0d0" strokeWidth="2.600" aria-hidden="true">
            <circle cx="23" cy="25" r="21" />
            <path d="M13 19h20M13 31h20" />
          </svg>
        </button>
      </div>
      <svg viewBox="0 0 304 40" className="absolute right-4 bottom-4 h-10 w-[304px]" aria-hidden="true">
        <defs>
          <filter id="smudge" x="-10%" y="-30%" width="120%" height="160%">
            <feGaussianBlur stdDeviation="1.800" />
          </filter>
        </defs>
        <path d="M10 10l30-4 50 4 70 2 60-4 75 2 5 24-60 6H60L14 32z" fill="#1f1f1f" filter="url(#smudge)" />
        <g filter="url(#smudge)" fill="#7c7c7c">
          <path d="M8 32c-2-8 2-12 6-14l-1 12zM26 4l5 0-3 14-10 4zM48 6l5 10-8 4zM84 4l4 8-6 10-6-2zM216 6l6 12-6 6zM238 5l4 0 4 18-14-2zM250 4l4 16-10 2z" />
          <path d="M60 12l5 20-8-2zM100 14l4 18-8 2zM140 14l6 18-10-2zM168 10l6 20-10 2zM262 12l6 20-8-4zM284 12l5 18-8 2z" fill="#333" />
        </g>
        <path d="M4 18c5-2 8 2 5 6l-6 6M112 31c2 6 10 6 12 0" stroke="#d4d4d4" strokeWidth="2.500" fill="none" />
      </svg>
    </footer>
  )
}

export default function App() {
  return (
    <div className="relative overflow-hidden bg-[#131313] font-['Roboto_Condensed','Liberation_Sans_Narrow',Roboto,'Noto_Sans_CJK_SC',sans-serif]">
      <header className="bg-[#1f2121]">
        <StatusBar />
        <NavBar />
      </header>
      <Quote />
      <Notice />
      <div className="h-[9px] bg-[#171717]" />
      <PeriodTabs />
      <AverageLegend />
      <PriceChart />
      <TimeAxis />
      <MacdChart />
      <VolumeChart />
      <InfoTabs />
      <BottomBar />
      <span className="absolute inset-y-0 left-px w-0.5 bg-[#dadada]" />
      <span className="absolute top-[38px] left-0 h-3 w-[51px] rounded-r-full bg-[#5b5c5c]" />
      <span className="absolute top-[993px] left-0 h-[62px] w-[7px] rounded-r bg-[#cccccc]" />
    </div>
  )
}
